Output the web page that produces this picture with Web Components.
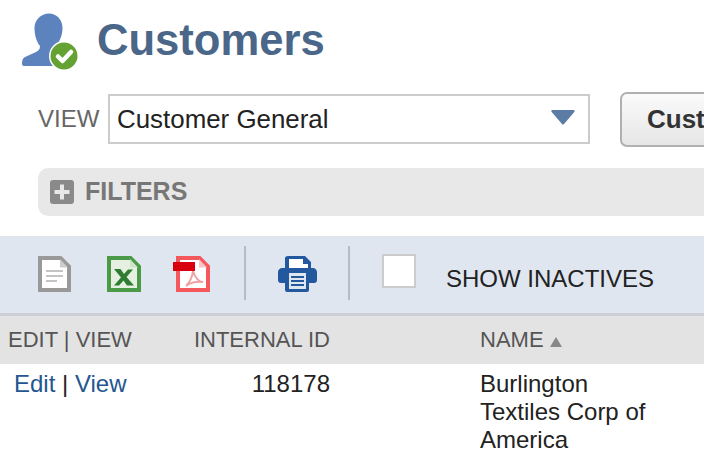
<!doctype html>
<html>
<head>
<meta charset="utf-8">
<style>
  html, body { margin: 0; padding: 0; background: #fff; overflow: hidden; }
  body { width: 704px; height: 460px; font-family: "Liberation Sans", Arial, sans-serif; }
</style>
</head>
<body>
<page-title>Customers</page-title>
<view-bar label="VIEW" value="Customer General" action="Customize View"></view-bar>
<filter-bar>FILTERS</filter-bar>
<list-toolbar></list-toolbar>
<customer-list></customer-list>

<script>
class PageTitle extends HTMLElement {
  css = () => /*css*/ `
    :host { display: flex; align-items: flex-start; height: 74px; padding: 12px 0 0 22px; box-sizing: border-box; }
    svg { width: 58px; height: 58px; flex: none; }
    h1 { margin: 3px 0 0 17px; font: bold 43.600px/50px "Liberation Sans", Arial, sans-serif; color: #4a6688; }
  `;

  html = () => /*html*/ `
    <style>${this.css()}</style>
    <svg viewBox="0 0 58 58">
      <path fill="#5d83bf" d="M27 1.500C35 1.500 40.500 8 40.500 16 40.500 24 37 30 34 34L34 40 46 46 46 54 2 54C.5 54 0 53 0 51 0 48 1 46 3 45L14 40C17 38.500 18 37 18 34 15 30 12.500 24 12.500 16 12.500 8 19 1.500 27 1.500z"/>
      <circle cx="42" cy="44" r="15" fill="#fff"/>
      <circle cx="42" cy="44" r="13.500" fill="#64a233"/>
      <path fill="none" stroke="#fff" stroke-width="4.500" stroke-linecap="round" stroke-linejoin="round" d="M36 44.500l4.500 4.500L49 40"/>
    </svg>
    <h1><slot></slot></h1>
  `;

  constructor() {
    super();
    this.attachShadow({ mode: "open" });
  }

  connectedCallback() {
    this.shadowRoot.innerHTML = this.html();
  }
}

class ViewBar extends HTMLElement {
  css = () => /*css*/ `
    :host { display: flex; align-items: center; height: 58px; margin-top: 16px; padding-left: 38px; overflow: hidden; font: 24px "Liberation Sans", Arial, sans-serif; }
    .label { color: #666; width: 70px; flex: none; }
    .select {
      width: 482px; height: 50px; flex: none; box-sizing: border-box;
      border: 2px solid #ccc; background: #fff; color: #222;
      display: flex; align-items: center; justify-content: space-between;
      padding: 0 13px 0 7px; font-size: 25.900px;
    }
    .select svg { width: 24px; height: 15px; margin-top: -4px; }
    button {
      margin: 1px 0 0 30px; flex: none; width: 200px; height: 55px; box-sizing: border-box; padding: 0 0 0 25px;
      border: 2px solid #b0b0b0; border-radius: 7px; text-align: left; white-space: nowrap;
      background: linear-gradient(#fafafa, #e6e6e6); color: #333;
      font: bold 26px "Liberation Sans", Arial, sans-serif;
    }
  `;

  html = () => /*html*/ `
    <style>${this.css()}</style>
    <span class="label">${this.getAttribute("label")}</span>
    <div class="select">
      <span>${this.getAttribute("value")}</span>
      <svg viewBox="0 0 24 15"><path fill="#5b7ca5" d="M1.500 0h21c1 0 1.500 1 1 1.800L13 14c-.6.700-1.400.700-2 0L.5 1.800C0 1 .5 0 1.500 0z"/></svg>
    </div>
    <button>${this.getAttribute("action")}</button>
  `;

  constructor() {
    super();
    this.attachShadow({ mode: "open" });
  }

  connectedCallback() {
    this.shadowRoot.innerHTML = this.html();
  }
}

class FilterBar extends HTMLElement {
  css = () => /*css*/ `
    :host {
      display: flex; align-items: center; gap: 11px; height: 48px; margin: 20px 0 20px 38px; padding-left: 12px;
      background: #e8e8e8; border-radius: 10px 0 0 10px;
      color: #777; font: bold 25px "Liberation Sans", Arial, sans-serif;
    }
    svg { width: 24px; height: 24px; }
    span { margin-top: -1px; }
  `;

  html = () => /*html*/ `
    <style>${this.css()}</style>
    <svg viewBox="0 0 24 24">
      <rect width="24" height="24" rx="3" fill="#8a8a8a"/>
      <path fill="#e8e8e8" d="M10 4.500h4V10h5.500v4H14v5.500h-4V14H4.500v-4H10z"/>
    </svg>
    <span><slot></slot></span>
  `;

  constructor() {
    super();
    this.attachShadow({ mode: "open" });
  }

  connectedCallback() {
    this.shadowRoot.innerHTML = this.html();
  }
}

class ListToolbar extends HTMLElement {
  css = () => /*css*/ `
    :host {
      display: flex; align-items: flex-start; height: 80px; box-sizing: border-box; padding-left: 38px;
      background: #dfe6f0; border-bottom: 3px solid #ccd0d6;
      color: #222; font: 24px "Liberation Sans", Arial, sans-serif;
    }
    svg { flex: none; height: 36px; margin-top: 20px; }
    .sep { flex: none; width: 2px; height: 54px; margin-top: 10px; background: #b4bcc6; }
    .check { flex: none; width: 34px; height: 34px; box-sizing: border-box; margin: 18px 30px 0 32px; background: #fff; border: 2px solid #ccc; }
    .label { margin-top: 29px; line-height: 28px; white-space: nowrap; }
  `;

  html = () => /*html*/ `
    <style>${this.css()}</style>
    <svg width="33" viewBox="0 0 33 36" style="margin-right:36px">
      <path fill="#fff" stroke="#999" stroke-width="4" d="M2 2h20.500l8.500 8.500V34H2z"/>
      <path fill="#ccc" d="M22 3v8.500h8z"/>
      <path stroke="#c4c4c4" stroke-width="2" d="M8 15h17M8 20h17M8 25h11"/>
    </svg>
    <svg width="34" viewBox="0 0 34 36" style="margin-right:32px">
      <path fill="#e6f0e0" stroke="#4b9a47" stroke-width="4" d="M2 2h21.500l8.500 8.500V34H2z"/>
      <path fill="#cfe3c8" d="M23 3v8.500h8z"/>
      <path fill="#2f7d32" d="M7 13h6.500l3.500 5 4-4.500h5l-6.500 7.500 7.500 8.500h-7l-3.500-5-4.500 5H7l7-8z"/>
    </svg>
    <svg width="37" viewBox="0 0 37 36" style="margin-right:34px">
      <path fill="#fff" stroke="#f4575c" stroke-width="4" d="M5 2h21.500l8.500 8.500V34H5z"/>
      <path fill="#f9c5c5" d="M26 3v8.500h8z"/>
      <path fill="none" stroke="#f0a0a2" stroke-width="2" d="M20 15c-1 8-4 12-7 15 5-4 10-5 17-4-5 0-8-5-10-11z"/>
      <rect y="6" width="22" height="9" fill="#d8000f"/>
    </svg>
    <span class="sep" style="margin-right:32px"></span>
    <svg width="39" viewBox="0 0 39 36" style="margin-right:31px">
      <path fill="#23579e" d="M10 0h17l6 6v6h2c2 0 4 2 4 4v8c0 2-1 3-3 3h-5v7c0 1-1 2-2 2H9c-1 0-2-1-2-2v-7H3c-2 0-3-1-3-3v-8c0-2 2-4 4-4h3V2c0-1 1-2 3-2z"/>
      <path fill="#fff" d="M11 3h14v5h5v4H11z"/>
      <path fill="#dfe6f0" d="M11 17h17v16H11z"/>
      <path stroke="#23579e" stroke-width="2" d="M13 21h13M13 25h13M13 29h13"/>
    </svg>
    <span class="sep"></span>
    <span class="check"></span>
    <span class="label">SHOW INACTIVES</span>
  `;

  constructor() {
    super();
    this.attachShadow({ mode: "open" });
  }

  connectedCallback() {
    this.shadowRoot.innerHTML = this.html();
  }
}

class CustomerList extends HTMLElement {
  css = () => /*css*/ `
    :host { display: block; font: 24px/28px "Liberation Sans", Arial, sans-serif; color: #222; }
    .row { display: grid; grid-template-columns: 190px 140px 150px 180px; }
    .row > :nth-child(2) { text-align: right; white-space: nowrap; }
    .row > :nth-child(3) { grid-column: 4; }
    .head { height: 48px; align-items: center; background: #e3e3e3; color: #555; font-size: 22px; }
    .head > :first-child { padding-left: 8px; }
    .head svg { width: 12px; height: 10px; }
    .body { padding-top: 6px; }
    .body > :first-child { padding-left: 14px; }
    a { color: #24568f; text-decoration: none; }
  `;

  html = () => /*html*/ `
    <style>${this.css()}</style>
    <div class="row head">
      <span>EDIT | VIEW</span>
      <span>INTERNAL ID</span>
      <span>NAME <svg viewBox="0 0 12 10"><path fill="#888" d="M6 0L12 10H0z"/></svg></span>
    </div>
    <div class="row body">
      <span><a href="#">Edit</a> | <a href="#">View</a></span>
      <span>118178</span>
      <span>Burlington<br>Textiles Corp of<br>America</span>
    </div>
  `;

  constructor() {
    super();
    this.attachShadow({ mode: "open" });
  }

  connectedCallback() {
    this.shadowRoot.innerHTML = this.html();
  }
}

customElements.define("page-title", PageTitle);
customElements.define("view-bar", ViewBar);
customElements.define("filter-bar", FilterBar);
customElements.define("list-toolbar", ListToolbar);
customElements.define("customer-list", CustomerList);
</script>
</body>
</html>
